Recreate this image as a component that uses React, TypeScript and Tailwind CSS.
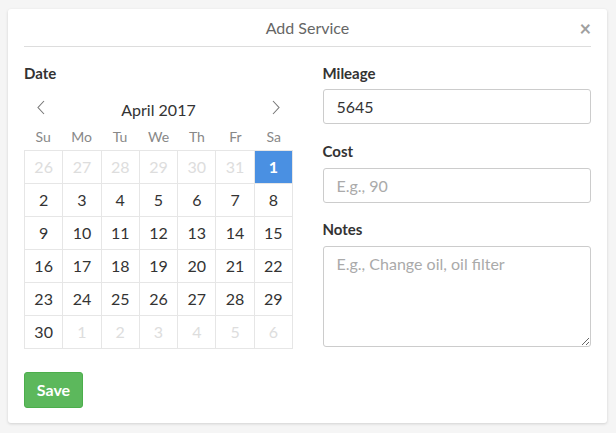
import { useState } from 'react';

const weekdays = ['Su', 'Mo', 'Tu', 'We', 'Th', 'Fr', 'Sa'];

type Day = { n: number; muted?: boolean; selected?: boolean };

const days: Day[] = [
  ...[26, 27, 28, 29, 30, 31].map(n => ({ n, muted: true })),
  { n: 1, selected: true },
  ...Array.from({ length: 29 }, (_, i) => ({ n: i + 2 })),
  ...[1, 2, 3, 4, 5, 6].map(n => ({ n, muted: true })),
];

function Chevron({ dir }: { dir: 'left' | 'right' }) {
  return (
    <svg width="8" height="15" viewBox="0 0 8 15" fill="none" stroke="#777" strokeWidth="1.1">
      {dir === 'left' ? <polyline points="7,1 1,7.5 7,14" /> : <polyline points="1,1 7,7.5 1,14" />}
    </svg>
  );
}

function Calendar() {
  return (
    <div className="w-[269px]">
      <div className="flex items-center justify-between h-[30px] mt-[8px]">
        <button className="w-[34px] flex justify-center"><Chevron dir="left" /></button>
        <span className="text-[16px] text-[#333] pt-[6px]">April 2017</span>
        <button className="w-[34px] flex justify-center"><Chevron dir="right" /></button>
      </div>
      <div className="grid grid-cols-7 h-[26px] items-center text-[14px] text-[#888] mt-[1px]">
        {weekdays.map(w => (
          <div key={w} className="text-center">{w}</div>
        ))}
      </div>
      <div className="grid grid-cols-7 border-l border-t border-[#e6e6e6] mt-[1px]">
        {days.map((d, i) => (
          <div
            key={i}
            className={
              'h-[33px] flex items-center justify-center border-r border-b border-[#e6e6e6] text-[16px] ' +
              (d.selected
                ? 'bg-[#4a90e2] text-white font-bold'
                : d.muted
                ? 'text-[#ddd]'
                : 'text-[#333]')
            }
          >
            {d.n}
          </div>
        ))}
      </div>
    </div>
  );
}

export default function App() {
  const [mileage, setMileage] = useState('5645');

  return (
    <div className="min-h-[433px] bg-[#f5f5f5] pt-[9px] pl-[8px]" style={{ fontFamily: 'Lato, "Open Sans", sans-serif' }}>
      <div className="w-[599px] h-[414px] bg-white rounded-[3px] shadow-[0_1px_3px_rgba(0,0,0,0.15)] px-4">
        <div className="grid grid-cols-[1fr_auto_1fr] items-center pt-[7px] pb-[6px] border-b border-[#ddd]">
          <div />
          <h1 className="text-[16px] leading-[24px] text-[#666]">Add Service</h1>
          <button className="justify-self-end text-[20px] leading-none font-bold text-[#a0a0a0] -mt-[1px]">×</button>
        </div>

        <div className="grid grid-cols-2 gap-[30px] mt-[16px]">
          <div>
            <label className="block text-[15px] leading-[21px] font-bold text-[#333]">Date</label>
            <Calendar />
          </div>

          <div>
            <label className="block text-[15px] leading-[21px] font-bold text-[#333]">Mileage</label>
            <input
              value={mileage}
              onChange={e => setMileage(e.target.value)}
              className="mt-[5px] w-full h-[35px] border border-[#ccc] rounded-[3px] px-[13px] text-[16px] text-[#333] outline-none"
            />
            <label className="block mt-[17px] text-[15px] leading-[21px] font-bold text-[#333]">Cost</label>
            <input
              placeholder="E.g., 90"
              className="mt-[6px] w-full h-[35px] border border-[#ccc] rounded-[3px] px-[13px] text-[16px] text-[#333] placeholder:text-[#aaa] outline-none"
            />
            <label className="block mt-[16px] text-[15px] leading-[21px] font-bold text-[#333]">Notes</label>
            <textarea
              placeholder="E.g., Change oil, oil filter"
              className="block mt-[6px] w-full h-[101px] border border-[#ccc] rounded-[3px] px-[13px] py-[5px] text-[16px] text-[#333] placeholder:text-[#aaa] outline-none"
            />
          </div>
        </div>

        <button className="mt-[23px] w-[59px] h-[36px] rounded-[3px] bg-[#5cb85c] border border-[#4cae4c] text-white font-bold text-[16px]">
          Save
        </button>
      </div>
    </div>
  );
}
